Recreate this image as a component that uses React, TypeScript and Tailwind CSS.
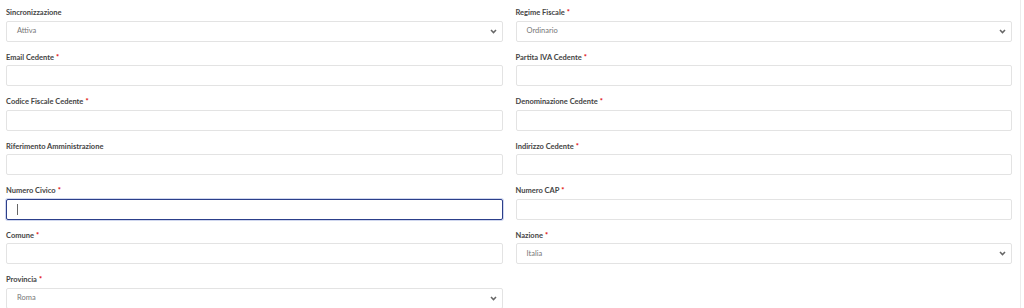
import React from "react";

type Field = { label: string; req?: boolean; type: "input" | "select"; value?: string; focus?: boolean };

const fields: Field[] = [
  { label: "Sincronizzazione", type: "select", value: "Attiva" },
  { label: "Regime Fiscale", req: true, type: "select", value: "Ordinario" },
  { label: "Email Cedente", req: true, type: "input" },
  { label: "Partita IVA Cedente", req: true, type: "input" },
  { label: "Codice Fiscale Cedente", req: true, type: "input" },
  { label: "Denominazione Cedente", req: true, type: "input" },
  { label: "Riferimento Amministrazione", type: "input" },
  { label: "Indirizzo Cedente", req: true, type: "input" },
  { label: "Numero Civico", req: true, type: "input", focus: true },
  { label: "Numero CAP", req: true, type: "input" },
  { label: "Comune", req: true, type: "input" },
  { label: "Nazione", req: true, type: "select", value: "Italia" },
  { label: "Provincia", req: true, type: "select", value: "Roma" },
];

function Chevron() {
  return (
    <svg width="7" height="5" viewBox="0 0 7 5" className="shrink-0">
      <path d="M1 1 L3.5 3.6 L6 1" fill="none" stroke="#666" strokeWidth="1.5" />
    </svg>
  );
}

function FieldView({ f }: { f: Field }) {
  return (
    <div className="flex flex-col">
      <div className="h-[9px] leading-[9px] text-[7.5px] font-bold text-[#444] whitespace-nowrap">
        {f.label}
        {f.req && <span className="text-[#e00000] ml-[2px]">*</span>}
      </div>
      <div
        className={
          "mt-[3.5px] h-[21px] rounded-[2px] bg-white flex items-center pl-[10px] pr-[5px] " +
          (f.focus
            ? "border-[1.5px] border-[#2c3f8a] shadow-[0_0_0_1px_rgba(120,140,210,0.35)]"
            : "border border-[#e3e3e3]")
        }
      >
        {f.type === "select" ? (
          <>
            <span className="flex-1 text-[7.5px] text-[#777]">{f.value}</span>
            <Chevron />
          </>
        ) : f.focus ? (
          <span className="block w-px h-[11px] bg-[#666]" />
        ) : null}
      </div>
    </div>
  );
}

export default function App() {
  return (
    <div
      className="w-[1024px] h-[308px] bg-white overflow-hidden relative"
      style={{ fontFamily: "Lato, 'Open Sans', sans-serif" }}
    >
      <div className="grid grid-cols-2 gap-x-[13px] gap-y-[11px] pl-[6px] pr-[12px] pt-[8px]">
        {fields.map((f, i) => (
          <FieldView key={i} f={f} />
        ))}
      </div>
      <div className="absolute top-0 right-[3px] w-px h-full bg-[#ececec]" />
    </div>
  );
}
